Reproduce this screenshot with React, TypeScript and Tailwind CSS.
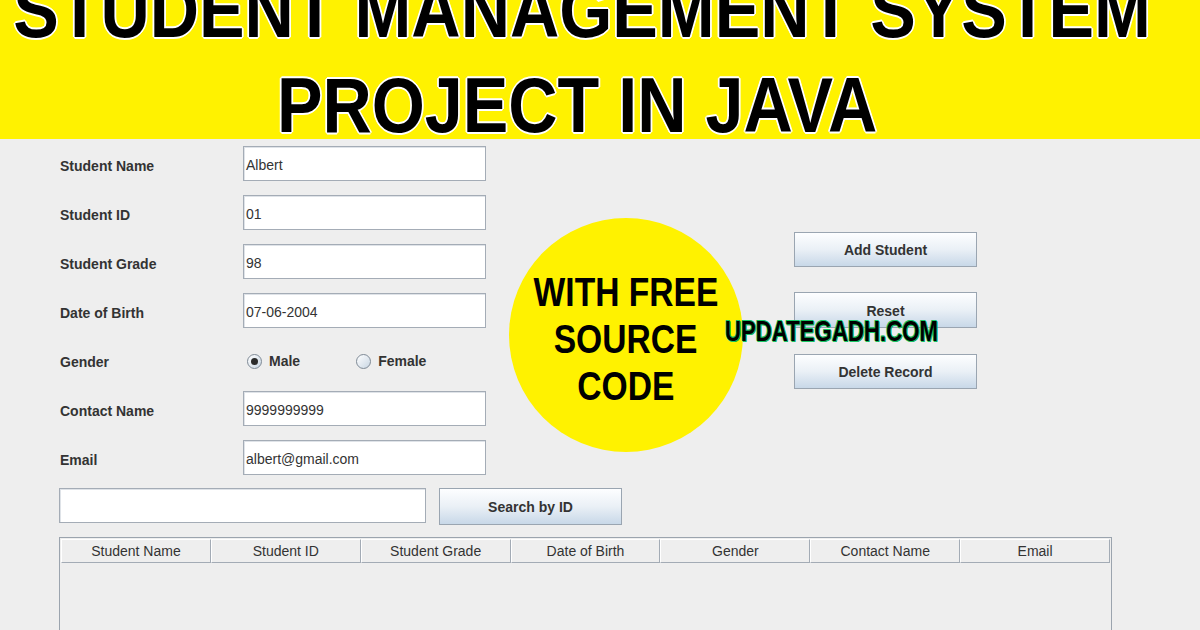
import React from 'react'

const FIELDS = [
  { label: 'Student Name', value: 'Albert' },
  { label: 'Student ID', value: '01' },
  { label: 'Student Grade', value: '98' },
  { label: 'Date of Birth', value: '07-06-2004' },
]

const FIELDS_2 = [
  { label: 'Contact Name', value: '9999999999' },
  { label: 'Email', value: 'albert@gmail.com' },
]

const COLUMNS = ['Student Name', 'Student ID', 'Student Grade', 'Date of Birth', 'Gender', 'Contact Name', 'Email']

const font = "font-['Liberation_Sans',Arial,sans-serif]"

function TextField({ value, className = 'w-[243px]' }: { value?: string; className?: string }) {
  return (
    <div className={`h-[35px] bg-white border border-[#a4acb6] shadow-[inset_1px_1px_0_#dfe3e8] flex items-center px-[2px] pt-[3px] text-[14px] text-[#333] ${className}`}>
      {value}
    </div>
  )
}

function SwingButton({ label, className = '' }: { label: string; className?: string }) {
  return (
    <div className={`w-[183px] h-[35px] border border-[#9aa5b1] bg-gradient-to-b from-[#fdfeff] via-[#eaf0f6] to-[#c8d8e8] flex items-center justify-center pt-[2px] text-[14px] font-bold text-[#333] ${className}`}>
      {label}
    </div>
  )
}

function Radio({ checked }: { checked?: boolean }) {
  return (
    <span className="w-[15px] h-[15px] rounded-full border border-[#7f8a96] bg-gradient-to-br from-[#ffffff] to-[#c9d6e3] flex items-center justify-center">
      {checked && <span className="w-[7px] h-[7px] rounded-full bg-[#2b2b2b]" />}
    </span>
  )
}

function Row({ label, children }: { label: string; children: React.ReactNode }) {
  return (
    <div className="flex items-center h-[35px]">
      <div className="w-[184px] pl-[1px] pt-[5px] text-[14px] font-bold text-[#333]">{label}</div>
      {children}
    </div>
  )
}

export default function App() {
  return (
    <div className={`relative w-[1200px] h-[630px] overflow-hidden bg-[#eeeeee] ${font}`}>
      {/* Title banner */}
      <div className="h-[139px] bg-[#fff200] overflow-hidden pr-[36px]">
        <div className="mt-[-37px] flex flex-col items-center text-[78px] leading-[95px] font-bold text-black whitespace-nowrap [text-shadow:2px_0_#fff,-2px_0_#fff,0_2px_#fff,0_-2px_#fff,1px_1px_#fff,-1px_-1px_#fff,1px_-1px_#fff,-1px_1px_#fff]">
          <div className="scale-x-[0.875]">STUDENT MANAGEMENT SYSTEM</div>
          <div className="scale-x-[0.875] mr-[10px]">PROJECT IN JAVA</div>
        </div>
      </div>

      <div className="pl-[59px] pt-[7px] flex flex-col gap-[13px]">
        <div className="flex">
          {/* Form */}
          <div className="w-[427px] flex flex-col gap-[14px]">
            {FIELDS.map((f) => (
              <Row key={f.label} label={f.label}>
                <TextField value={f.value} />
              </Row>
            ))}
            <Row label="Gender">
              <div className="flex items-center pt-[4px] text-[14px] font-bold text-[#333]">
                <span className="ml-[4px]"><Radio checked /></span>
                <span className="ml-[7px]">Male</span>
                <span className="ml-[56px]"><Radio /></span>
                <span className="ml-[7px]">Female</span>
              </div>
            </Row>
            {FIELDS_2.map((f) => (
              <Row key={f.label} label={f.label}>
                <TextField value={f.value} />
              </Row>
            ))}
          </div>

          {/* Promo circle */}
          <div className="ml-[23px] mt-[72px] w-[234px] h-[234px] rounded-full bg-[#fff200] flex flex-col items-center justify-center pt-[8px] text-[40px] leading-[47px] font-bold text-black">
            <div className="scale-x-[0.84] whitespace-nowrap">WITH FREE</div>
            <div className="scale-x-[0.84]">SOURCE</div>
            <div className="scale-x-[0.84]">CODE</div>
          </div>

          {/* Actions */}
          <div className="ml-[51px] mt-[86px] flex flex-col">
            <SwingButton label="Add Student" />
            <SwingButton label="Reset" className="mt-[25px] h-[36px]" />
            <SwingButton label="Delete Record" className="mt-[26px]" />
          </div>
        </div>

        {/* Search */}
        <div className="flex items-start">
          <TextField className="w-[367px]" />
          <SwingButton label="Search by ID" className="ml-[13px] h-[37px]" />
        </div>

        {/* Table */}
        <div className="mt-[-1px] w-[1053px] h-[200px] border border-[#9ba4ae] p-[1px] bg-[#eeeeee]">
          <div className="flex">
            {COLUMNS.map((c) => (
              <div
                key={c}
                className="w-[150px] h-[24px] flex items-center justify-center pt-[1px] text-[14px] text-[#333] border-t border-l border-t-white border-l-white border-r border-b border-r-[#a3abb5] border-b-[#a3abb5]"
              >
                {c}
              </div>
            ))}
          </div>
        </div>
      </div>

      {/* Watermark */}
      <div className="absolute left-[725px] top-[316px] origin-left scale-x-[0.74] text-[30px] leading-[30px] font-bold text-black whitespace-nowrap [text-shadow:1px_0_#17c964,-1px_0_#17c964,0_1px_#17c964,0_-1px_#17c964,1px_1px_#0a9a4a,-1px_-1px_#0a9a4a]">
        UPDATEGADH.COM
      </div>
    </div>
  )
}
